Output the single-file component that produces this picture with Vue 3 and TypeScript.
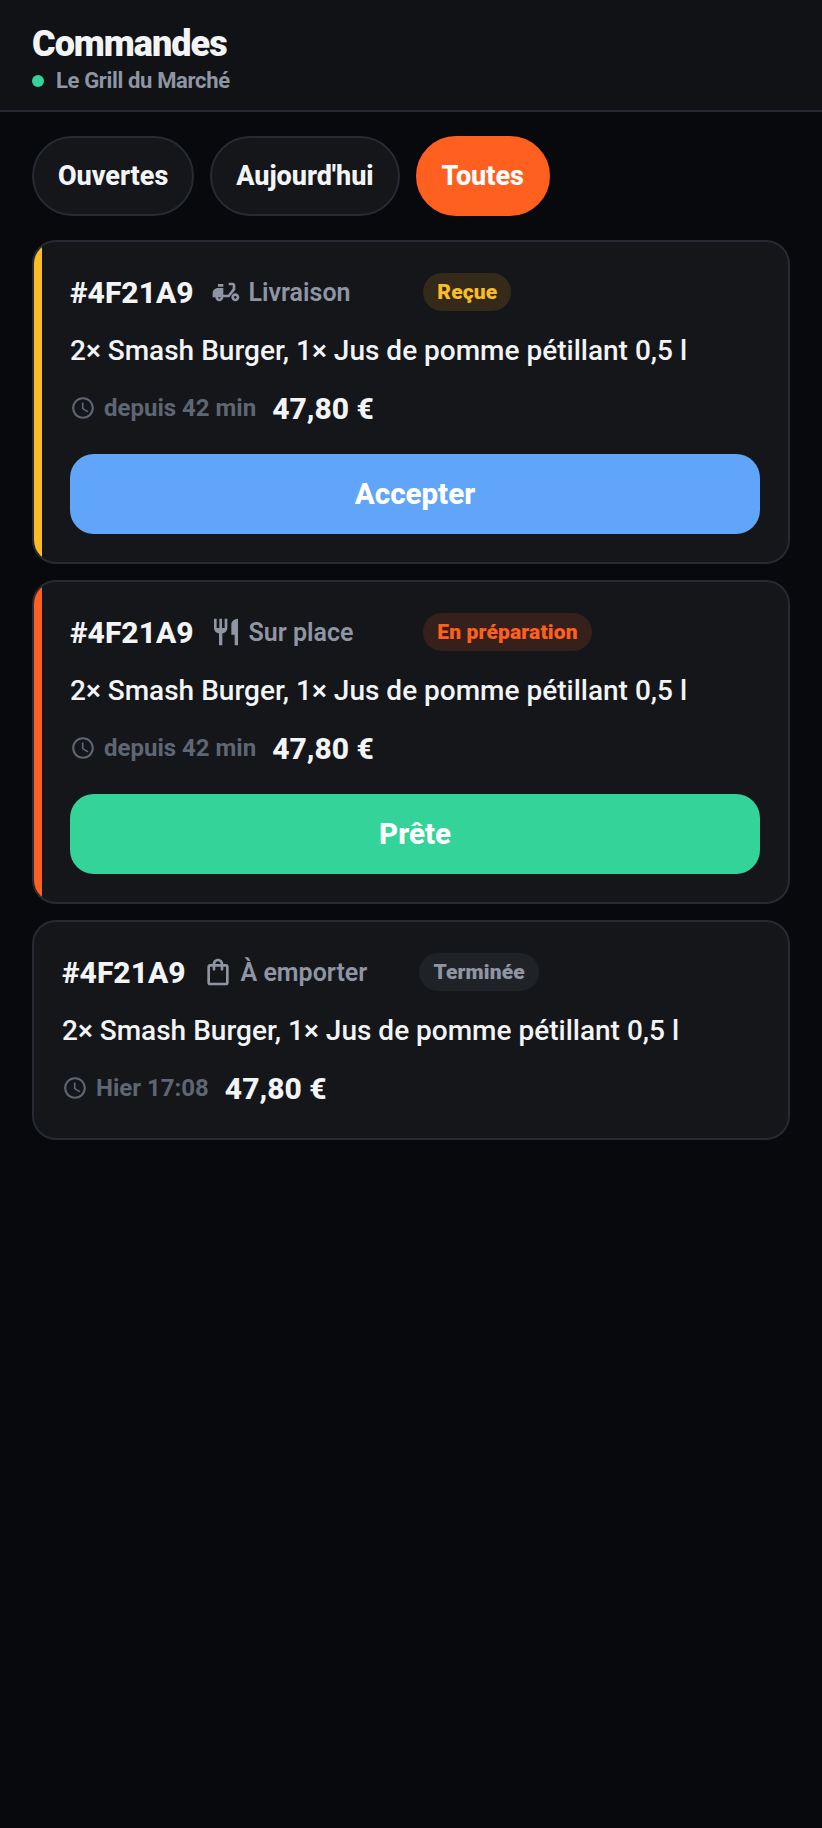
<script setup lang="ts">
interface Order {
  type: string
  icon: 'moped' | 'restaurant' | 'bag'
  status: string
  tone: 'new' | 'prep' | 'done'
  time: string
  action?: string
}

const filters = [
  { label: 'Ouvertes', active: false },
  { label: "Aujourd'hui", active: false },
  { label: 'Toutes', active: true },
]

const orders: Order[] = [
  { type: 'Livraison', icon: 'moped', status: 'Reçue', tone: 'new', time: 'depuis 42 min', action: 'Accepter' },
  { type: 'Sur place', icon: 'restaurant', status: 'En préparation', tone: 'prep', time: 'depuis 42 min', action: 'Prête' },
  { type: 'À emporter', icon: 'bag', status: 'Terminée', tone: 'done', time: 'Hier 17:08' },
]
</script>

<template>
  <div class="page">
    <header class="header">
      <h1 class="title">Commandes</h1>
      <div class="venue"><span class="dot"></span>Le Grill du Marché</div>
    </header>

    <nav class="filters">
      <button v-for="f in filters" :key="f.label" class="chip" :class="{ active: f.active }">{{ f.label }}</button>
    </nav>

    <main class="list">
      <article v-for="o in orders" :key="o.type" class="card">
        <div v-if="o.tone !== 'done'" class="stripe" :class="o.tone"></div>
        <div class="body" :class="{ plain: !o.action }">
          <div class="top">
            <span class="num">#4F21A9</span>
            <span class="type">
              <svg class="type-icon" viewBox="0 0 24 24" fill="currentColor">
                <template v-if="o.icon === 'moped'">
                  <path d="M19 7c0-1.1-.9-2-2-2h-3v2h3v2.65L13.52 14H10V9H6c-2.21 0-4 1.79-4 4v3h2c0 1.66 1.34 3 3 3s3-1.34 3-3h4.48L19 10.35V7zM7 17c-.55 0-1-.45-1-1h2c0 .55-.45 1-1 1z" />
                  <path d="M6 6h4v2H6z" />
                  <path d="M19 13c-1.66 0-3 1.34-3 3s1.34 3 3 3 3-1.34 3-3-1.34-3-3-3zm0 4c-.55 0-1-.45-1-1s.45-1 1-1 1 .45 1 1-.45 1-1 1z" />
                </template>
                <path v-else-if="o.icon === 'restaurant'" d="M11 9H9V2H7v7H5V2H3v7c0 2.12 1.66 3.84 3.75 3.97V22h2.5v-9.03C11.34 12.84 13 11.12 13 9V2h-2v7zm5-3v8h2.5v8H21V2c-2.76 0-5 2.24-5 4z" />
                <path v-else d="M18 6h-2c0-2.21-1.79-4-4-4S8 3.79 8 6H6c-1.1 0-2 .9-2 2v12c0 1.1.9 2 2 2h12c1.1 0 2-.9 2-2V8c0-1.1-.9-2-2-2zm-6-2c1.1 0 2 .9 2 2h-4c0-1.1.9-2 2-2zm6 16H6V8h2v2c0 .55.45 1 1 1s1-.45 1-1V8h4v2c0 .55.45 1 1 1s1-.45 1-1V8h2v12z" />
              </svg>
              {{ o.type }}
            </span>
            <span class="badge-cell"><span class="badge" :class="o.tone">{{ o.status }}</span></span>
          </div>
          <p class="items">2× Smash Burger, 1× Jus de pomme pétillant 0,5 l</p>
          <div class="meta">
            <span class="time">
              <svg class="clock" viewBox="0 0 24 24" fill="currentColor">
                <path d="M11.99 2C6.47 2 2 6.48 2 12s4.47 10 9.99 10C17.52 22 22 17.52 22 12S17.52 2 11.99 2zM12 20c-4.42 0-8-3.58-8-8s3.58-8 8-8 8 3.58 8 8-3.58 8-8 8zm.5-13H11v6l5.25 3.15.75-1.23-4.5-2.67z" />
              </svg>
              {{ o.time }}
            </span>
            <span class="price">47,80 €</span>
          </div>
          <button v-if="o.action" class="action" :class="o.tone">{{ o.action }}</button>
        </div>
      </article>
    </main>
  </div>
</template>

<style scoped>
.page {
  min-height: 1828px;
  background: #07090d;
  font-family: Roboto, "Noto Sans", sans-serif;
  color: #f3f4f6;
}
.header {
  height: 112px;
  box-sizing: border-box;
  background: #101216;
  border-bottom: 2px solid #262a32;
  padding: 24px 32px 0;
}
.title {
  margin: 0;
  font-size: 36px;
  line-height: 40px;
  font-weight: 900;
  letter-spacing: -1px;
}
.venue {
  display: flex;
  align-items: center;
  gap: 12px;
  margin-top: 3px;
  font-size: 22px;
  line-height: 28px;
  font-weight: 700;
  letter-spacing: -0.35px;
  color: #8f95a3;
}
.dot {
  width: 12px;
  height: 12px;
  border-radius: 50%;
  background: #34d399;
}
.filters {
  display: flex;
  gap: 16px;
  padding: 24px 32px;
}
.chip {
  height: 80px;
  padding: 0 24px;
  border: 2px solid #262a32;
  border-radius: 40px;
  background: #14161a;
  color: #f3f4f6;
  font: 800 27px Roboto, sans-serif;
  letter-spacing: -0.04px;
}
.chip.active {
  background: #ff5f1f;
  border-color: #ff5f1f;
  color: #fff;
}
.list {
  display: flex;
  flex-direction: column;
  gap: 16px;
  padding: 0 32px;
}
.card {
  display: flex;
  overflow: hidden;
  border: 2px solid #262a32;
  border-radius: 24px;
  background: #14161a;
}
.stripe {
  flex: none;
  width: 8px;
}
.stripe.new { background: #fbbc24; }
.stripe.prep { background: #ff5f1f; }
.body {
  flex: 1;
  min-width: 0;
  padding: 31px 28px 28px;
}
.body.plain {
  padding-bottom: 32px;
}
.top {
  display: flex;
  align-items: center;
  gap: 16px;
  height: 38px;
}
.num {
  font-size: 30px;
  font-weight: 800;
}
.type {
  display: flex;
  align-items: center;
  gap: 7px;
  font-size: 25px;
  font-weight: 600;
  color: #8f95a3;
}
.type-icon {
  width: 32px;
  height: 32px;
  flex: none;
}
.badge-cell {
  flex: none;
  width: 48.8%;
  margin-left: auto;
}
.badge {
  display: inline-flex;
  align-items: center;
  height: 38px;
  padding: 0 14px;
  border-radius: 19px;
  font-size: 21px;
  font-weight: 900;
  letter-spacing: 0.15px;
}
.badge.new { background: #352a1a; color: #fbbc24; }
.badge.prep { background: #36201b; color: #ff5f1f; }
.badge.done { background: #1f2227; color: #8f95a3; }
.items {
  margin: 22px 0 0;
  font-size: 28px;
  line-height: 36px;
  font-weight: 500;
}
.meta {
  display: flex;
  align-items: center;
  gap: 16px;
  margin-top: 21px;
  height: 36px;
}
.time {
  display: flex;
  align-items: center;
  gap: 8px;
  font-size: 24px;
  font-weight: 700;
  color: #5f6673;
}
.clock {
  width: 26px;
  height: 26px;
  flex: none;
}
.price {
  font-size: 30px;
  font-weight: 800;
}
.action {
  display: block;
  width: 100%;
  height: 80px;
  margin-top: 28px;
  border: 0;
  border-radius: 24px;
  color: #fff;
  font: 800 29.5px Roboto, sans-serif;
}
.action.new { background: #60a5fa; }
.action.prep { background: #34d399; }
</style>

<style>
html, body {
  margin: 0;
  background: #07090d;
}
</style>
